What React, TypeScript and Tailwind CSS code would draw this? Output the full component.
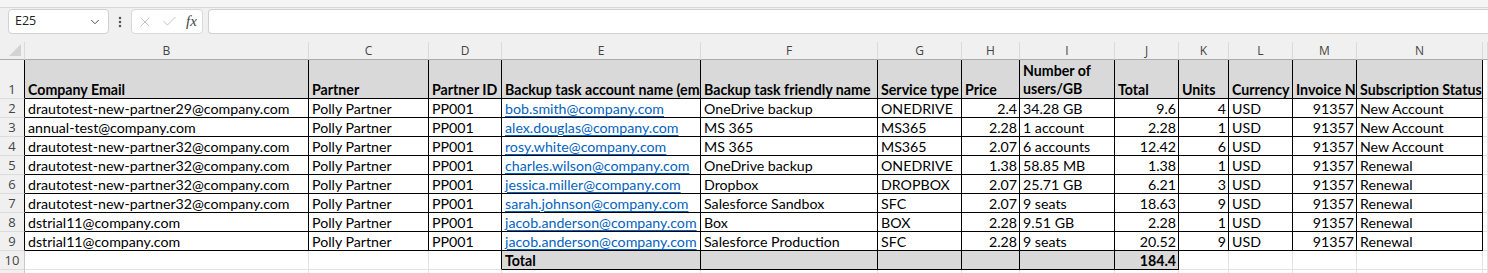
import { ChevronDown, EllipsisVertical, X, Check } from 'lucide-react'

// B..N column letters, plus an empty O sliver on the right
const LETTERS = ['B', 'C', 'D', 'E', 'F', 'G', 'H', 'I', 'J', 'K', 'L', 'M', 'N', '']
const RIGHT_ALIGNED = new Set([7, 9, 10, 12]) // H, J, K, M

const HEADERS = [
  'Company Email', 'Partner', 'Partner ID', 'Backup task account name (email)', 'Backup task friendly name',
  'Service type', 'Price', 'Number of users/GB', 'Total', 'Units', 'Currency', 'Invoice Number', 'Subscription Status',
]

const ROWS: string[][] = [
  ['drautotest-new-partner29@company.com', 'Polly Partner', 'PP001', 'bob.smith@company.com', 'OneDrive backup', 'ONEDRIVE', '2.4', '34.28 GB', '9.6', '4', 'USD', '91357', 'New Account'],
  ['annual-test@company.com', 'Polly Partner', 'PP001', 'alex.douglas@company.com', 'MS 365', 'MS365', '2.28', '1 account', '2.28', '1', 'USD', '91357', 'New Account'],
  ['drautotest-new-partner32@company.com', 'Polly Partner', 'PP001', 'rosy.white@company.com', 'MS 365', 'MS365', '2.07', '6 accounts', '12.42', '6', 'USD', '91357', 'New Account'],
  ['drautotest-new-partner32@company.com', 'Polly Partner', 'PP001', 'charles.wilson@company.com', 'OneDrive backup', 'ONEDRIVE', '1.38', '58.85 MB', '1.38', '1', 'USD', '91357', 'Renewal'],
  ['drautotest-new-partner32@company.com', 'Polly Partner', 'PP001', 'jessica.miller@company.com', 'Dropbox', 'DROPBOX', '2.07', '25.71 GB', '6.21', '3', 'USD', '91357', 'Renewal'],
  ['drautotest-new-partner32@company.com', 'Polly Partner', 'PP001', 'sarah.johnson@company.com', 'Salesforce Sandbox', 'SFC', '2.07', '9 seats', '18.63', '9', 'USD', '91357', 'Renewal'],
  ['dstrial11@company.com', 'Polly Partner', 'PP001', 'jacob.anderson@company.com', 'Box', 'BOX', '2.28', '9.51 GB', '2.28', '1', 'USD', '91357', 'Renewal'],
  ['dstrial11@company.com', 'Polly Partner', 'PP001', 'jacob.anderson@company.com', 'Salesforce Production', 'SFC', '2.28', '9 seats', '20.52', '9', 'USD', '91357', 'Renewal'],
]

// r: 1..11 sheet row, c: 1..14 (B..O)
function boxed(r: number, c: number) {
  if (r >= 1 && r <= 9 && c >= 1 && c <= 13) return true
  if (r === 10 && c >= 4 && c <= 9) return true
  return false
}

function cellText(r: number, c: number): string {
  if (r === 1) return HEADERS[c - 1] ?? ''
  if (r >= 2 && r <= 9) return ROWS[r - 2][c - 1] ?? ''
  if (r === 10 && c === 4) return 'Total'
  if (r === 10 && c === 9) return '184.4'
  return ''
}

function Cell({ r, c }: { r: number; c: number }) {
  const text = cellText(r, c)
  const gray = (r === 1 && c <= 13) || (r === 10 && c >= 4 && c <= 9)
  const rightBlack = boxed(r, c) || boxed(r, c + 1)
  const bottomBlack = boxed(r, c) || boxed(r + 1, c)
  const bold = r === 1 || r === 10
  const right = r > 1 && RIGHT_ALIGNED.has(c)
  const link = r >= 2 && r <= 9 && c === 4
  const wrap = r === 1 && c === 8

  return (
    <div
      className={`flex items-end overflow-hidden border-r border-b ${
        gray ? 'bg-[#d9d9d9]' : 'bg-white'
      } ${rightBlack ? 'border-r-black' : 'border-r-[#e1e1e1]'} ${
        bottomBlack ? 'border-b-black' : 'border-b-[#e1e1e1]'
      } ${right ? 'justify-end pr-[2px]' : 'pl-[3px]'} ${bold ? 'font-bold' : ''}`}
    >
      {wrap ? (
        <span className="leading-[18px]">{text}</span>
      ) : link ? (
        <span className="whitespace-nowrap leading-[17px] text-[#0563c1] underline underline-offset-[2px]">{text}</span>
      ) : (
        <span className="whitespace-nowrap leading-[17px]">{text}</span>
      )}
    </div>
  )
}

function RowHeader({ r }: { r: number }) {
  const black = boxed(r, 1)
  return (
    <div
      className={`flex items-end justify-center border-r border-b border-b-[#dcdcdc] bg-[#f0f0f0] text-[13px] leading-[17px] text-[#444] ${
        black ? 'border-r-black' : 'border-r-[#c8c8c8]'
      }`}
      style={{ fontFamily: '"Open Sans", sans-serif' }}
    >
      {r <= 10 ? r : ''}
    </div>
  )
}

export default function App() {
  const sheetRows = [1, 2, 3, 4, 5, 6, 7, 8, 9, 10, 11]

  return (
    <div className="h-[273px] w-[1488px] overflow-hidden bg-[#f0f0f0] text-[14.2px] text-black" style={{ fontFamily: 'Lato, sans-serif' }}>
      {/* Ribbon edge */}
      <div className="h-[8px] border-b border-[#d8d8d8] bg-[#f5f5f5]" />

      {/* Formula bar */}
      <div className="flex h-[34px] items-start pt-[1px]" style={{ fontFamily: '"Open Sans", sans-serif' }}>
        <div className="ml-[8px] flex h-[25px] w-[101px] items-center justify-between rounded-[4px] border border-[#d1d1d1] bg-white pl-[6px] pr-[6px] text-[12.5px] text-[#222]">
          <span>E25</span>
          <ChevronDown size={14} strokeWidth={1.6} className="text-[#444]" />
        </div>
        <div className="flex h-[25px] w-[22px] items-center justify-center">
          <EllipsisVertical size={14} strokeWidth={2.4} className="text-[#555]" />
        </div>
        <div className="flex h-[25px] w-[72px] items-center gap-[8px] rounded-[4px] border border-[#d9d9d9] bg-white pl-[5px]">
          <X size={16} strokeWidth={1.2} className="text-[#b8b8b8]" />
          <Check size={17} strokeWidth={1.2} className="text-[#b8b8b8]" />
          <span className="text-[15px] italic text-[#444]" style={{ fontFamily: '"Liberation Serif", serif' }}>
            fx
          </span>
        </div>
        <div className="ml-[5px] h-[25px] flex-1 rounded-l-[4px] border border-r-0 border-[#d1d1d1] bg-white" />
      </div>

      {/* Sheet grid */}
      <div className="grid grid-cols-[25px_284px_120px_73px_199px_177px_84px_58px_95px_64px_50px_64px_64px_126px_5px] grid-rows-[18px_39px_repeat(9,19px)_19px]">
        {/* Column letters */}
        <div className="relative border-r border-b border-r-[#dadada] border-b-[#ababab] bg-[#f0f0f0]">
          <div className="absolute bottom-[3px] right-[3px] h-0 w-0 border-b-[12px] border-l-[12px] border-b-[#d2d2d2] border-l-transparent" />
        </div>
        {LETTERS.map((l, i) => (
          <div
            key={i}
            className="flex items-center justify-center border-r border-b border-r-[#dadada] border-b-[#ababab] bg-[#f0f0f0] text-[12px] text-[#444]"
            style={{ fontFamily: '"Open Sans", sans-serif' }}
          >
            {l}
          </div>
        ))}

        {sheetRows.map(r => (
          <div key={r} className="contents">
            <RowHeader r={r} />
            {LETTERS.map((_, i) => (
              <Cell key={i} r={r} c={i + 1} />
            ))}
          </div>
        ))}
      </div>
    </div>
  )
}
